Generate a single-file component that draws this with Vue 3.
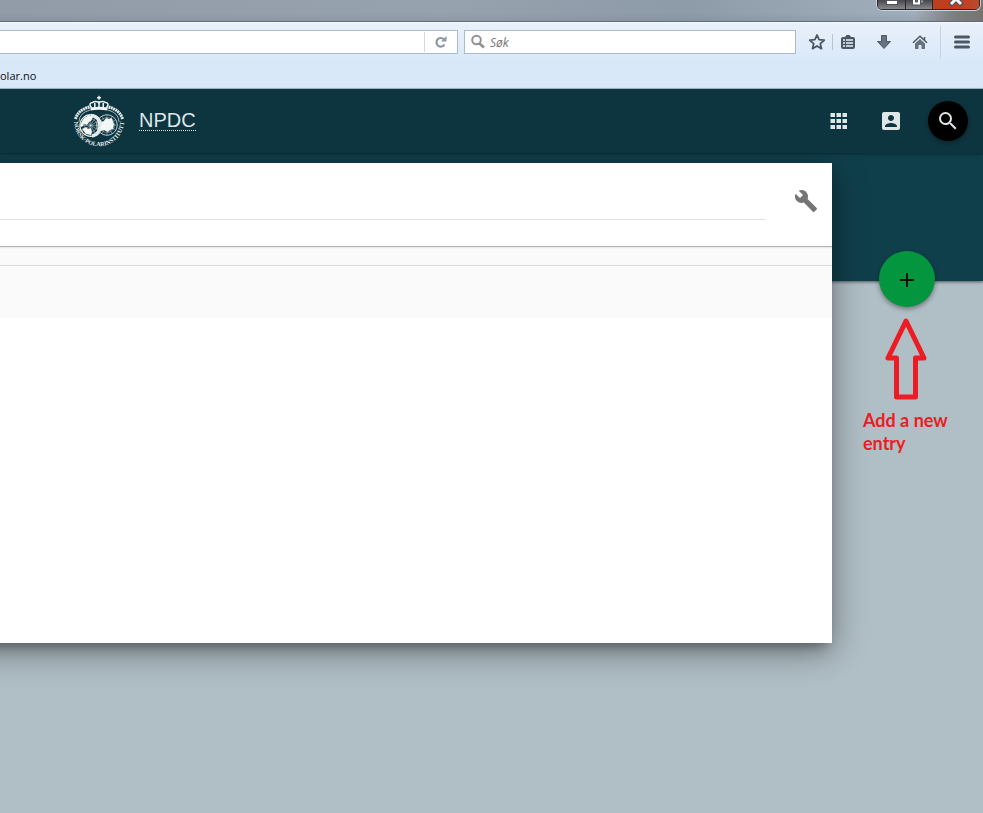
<script setup>
import { ref } from 'vue'

const address = ref('')
const browserQuery = ref('')
const query = ref('')
const gridCells = [4, 10, 16]
const meridians = [0, 30, 60, 90, 120, 150]
</script>

<template>
  <div class="window">
    <div class="titlebar">
      <div class="window-controls">
        <button class="control" aria-label="Minimize">
          <svg width="27" height="10" viewBox="0 0 27 10"><rect x="8.500" y=".5" width="11" height="4" fill="#fff" stroke="#50545e" /></svg>
        </button>
        <button class="control" aria-label="Restore">
          <svg width="26" height="10" viewBox="0 0 26 10">
            <path d="M15 0h2v3h-2z" fill="#dfe2e6" stroke="#50545e" />
            <path d="M6.500-3h8v8h-8z" fill="#fff" stroke="#50545e" />
            <path d="M9.500-1h2v3h-2z" fill="#6a6e74" stroke="#50545e" />
          </svg>
        </button>
        <button class="control close" aria-label="Close">
          <svg width="46" height="10" viewBox="0 0 46 10">
            <path d="M17 5l6-6 6 6" fill="none" stroke="#4b5064" stroke-width="5" />
            <path d="M18 4l5-5 5 5" fill="none" stroke="#f2f4f8" stroke-width="3" />
          </svg>
        </button>
      </div>
    </div>

    <div class="browser">
      <div class="nav">
        <div class="address">
          <input v-model="address" type="text" aria-label="Address" />
          <button class="reload" aria-label="Reload">
            <svg width="14" height="14" viewBox="0 0 14 14">
              <path d="M10.500 9.500A4.300 4.300 0 1 1 9.800 4.200" fill="none" stroke="#8b97a5" stroke-width="2.200" />
              <path d="M12.500 1v5.500H7z" fill="#8b97a5" />
            </svg>
          </button>
        </div>
        <label class="search">
          <svg width="16" height="16" viewBox="0 0 16 16">
            <circle cx="6.500" cy="6" r="4.300" fill="none" stroke="#929292" stroke-width="2" />
            <path d="M9.500 9.500l4.500 4" stroke="#929292" stroke-width="2.800" />
          </svg>
          <input v-model="browserQuery" type="text" placeholder="Søk" aria-label="Søk" />
        </label>
        <div class="tools">
          <button class="tool star" aria-label="Bookmark">
            <svg width="18" height="18" viewBox="0 0 18 18"><path d="M9 2l2.100 4.700 5.100.5-3.900 3.400 1.200 5L9 13l-4.500 2.600 1.200-5-3.900-3.400 5.100-.5z" fill="none" stroke="#4b5764" stroke-width="1.800" stroke-linejoin="round" /></svg>
          </button>
          <button class="tool list" aria-label="Bookmarks">
            <svg width="16" height="16" viewBox="0 0 16 16">
              <path d="M3 3h2l1.500-2h3L11 3h2q2 0 2 2v8q0 2-2 2H3q-2 0-2-2V5q0-2 2-2z" fill="#4b5764" />
              <path d="M3 6h2M6 6h7M3 9h2M6 9h7M3 12h2M6 12h7" stroke="#e8f1fa" stroke-width="1.700" />
            </svg>
          </button>
          <button class="tool" aria-label="Downloads">
            <svg width="16" height="16" viewBox="0 0 16 16"><path d="M5.500 1.500h5v6h4L8 14.500 1.500 7.500h4z" fill="#657280" stroke="#4b5764" /></svg>
          </button>
          <button class="tool" aria-label="Home">
            <svg width="16" height="16" viewBox="0 0 16 16">
              <path d="M3 9.500l5-4.500 5 4.500V15H9.500v-4h-3v4H3z" fill="#657280" />
              <path d="M1 8.800l7-6.500 7 6.500" fill="none" stroke="#4b5764" stroke-width="1.500" />
              <path d="M12.500 3v3" fill="none" stroke="#4b5764" stroke-width="1.500" />
            </svg>
          </button>
          <button class="tool menu" aria-label="Menu">
            <svg width="16" height="14" viewBox="0 0 16 14"><path d="M1.500 2h13M1.500 7h13M1.500 12h13" stroke="#4b5764" stroke-width="3" stroke-linecap="round" /></svg>
          </button>
        </div>
      </div>
      <div class="bookmarks"><a href="#">olar.no</a></div>
    </div>

    <header class="header">
      <svg class="logo" width="54" height="54" viewBox="0 0 54 54" role="img" aria-label="Norsk Polarinstitutt">
        <defs><path id="motto" d="M2.200 24a25 25 0 1 0 49.600 0" /></defs>
        <g fill="none" stroke="#e4eaec">
          <path d="M3.500 25Q6 16 17.500 13M50.500 25Q48 16 36.500 13" stroke-width="3" stroke-dasharray="2 .5" />
          <path d="M7 28Q7 19 18 16M47 28Q47 19 36 16" stroke-width=".7" />
          <circle cx="18.700" cy="31.500" r="10.800" stroke-width="1.200" />
          <circle cx="35" cy="31" r="10.300" stroke-width=".8" />
          <g stroke-width=".4">
            <path v-for="angle in meridians" :key="angle" d="M8 31.500h21.400" :transform="`rotate(${angle} 18.700 31.500)`" />
            <path v-for="angle in meridians" :key="angle + 180" d="M25 31h20" :transform="`rotate(${angle} 35 31)`" />
            <circle cx="18.700" cy="31.500" r="6.500" />
            <circle cx="35" cy="31" r="7.500" />
          </g>
          <path d="M19 21.500q9 1 9 10 0 9-8 10.500" stroke-width="3.500" />
        </g>
        <g fill="#f3f6f7">
          <path d="M9 29l3-5 5-3 4 2-2 4-2 1-2 3-3-1-2 3-2-1zM10 35l4-2 2 2 3-1 1 4-1 3-5-1z" />
          <path d="M29 28l3-1 2-3 3 1 3-1 1 4 1 2-1 5-3 1-2 2-4-2-3 1-1-3 2-3z" />
          <path d="M26.300 1.800h1.400v1.300H29v1.300h-1.300v1.400h-1.400V4.400H25V3.100h1.300z" />
          <path d="M18.500 13.600q8.500-1.500 17 0v2.800q-8.500-1.300-17 0z" />
        </g>
        <g fill="none" stroke="#f3f6f7" stroke-width="1.500">
          <path d="M19.500 14q-3.500-5 1-5.500 4-2 6.500.5 2.500-2.500 6.500-.5 4.500.5 1 5.500" />
          <path d="M22.800 13.500V9M27 13.200V7M31.200 13.500V9" />
        </g>
        <text class="motto"><textPath href="#motto" startOffset="50%" text-anchor="middle">NORSK·POLARINSTITUTT</textPath></text>
      </svg>
      <a class="brand" href="#">NPDC</a>
      <nav class="actions">
        <button class="action" aria-label="Apps">
          <svg width="24" height="24" viewBox="0 0 24 24" fill="#dfe6e8">
            <template v-for="y in gridCells" :key="y">
              <rect v-for="x in gridCells" :key="x" :x="x - .5" :y="y" width="4.500" height="4" />
            </template>
          </svg>
        </button>
        <button class="action" aria-label="Account">
          <svg width="24" height="24" viewBox="0 0 24 24" fill="#dfe6e8"><path d="M3 5v14a2 2 0 0 0 2 2h14c1.100 0 2-.9 2-2V5c0-1.100-.9-2-2-2H5a2 2 0 0 0-2 2zm12 4c0 1.660-1.340 3-3 3s-3-1.340-3-3 1.340-3 3-3 3 1.340 3 3zm-9 8c0-2 4-3.100 6-3.100s6 1.100 6 3.100v1H6v-1z" /></svg>
        </button>
        <button class="action find" aria-label="Search">
          <svg width="24" height="24" viewBox="0 0 24 24" fill="#dfe6e8"><path d="M15.500 14h-.79l-.28-.27A6.470 6.470 0 0 0 16 9.500 6.500 6.500 0 1 0 9.500 16c1.610 0 3.090-.59 4.230-1.570l.27.28v.79l5 4.990L20.490 19l-4.990-5zm-6 0C7.010 14 5 11.990 5 9.500S7.010 5 9.500 5 14 7.010 14 9.500 11.990 14 9.500 14z" /></svg>
        </button>
      </nav>
    </header>

    <main class="page">
      <div class="hero"></div>
      <div class="content">
        <section class="card">
          <div class="filter">
            <input v-model="query" type="text" aria-label="Filter entries" />
            <button class="settings" aria-label="Settings">
              <svg width="24" height="24" viewBox="0 0 24 24" fill="#757575"><path d="M22.700 19l-9.100-9.100c.9-2.300.4-5-1.500-6.900-2-2-5-2.400-7.400-1.300L9 6 6 9 1.600 4.700C.4 7.100.9 10.100 2.900 12.100c1.900 1.900 4.600 2.400 6.900 1.500l9.100 9.100c.4.4 1 .4 1.400 0l2.300-2.300c.5-.4.5-1.100.1-1.400z" /></svg>
            </button>
          </div>
          <div class="strip"></div>
          <div class="summary"></div>
          <div class="results"></div>
        </section>
        <aside class="side">
          <button class="add" aria-label="Add a new entry">
            <svg width="24" height="24" viewBox="0 0 24 24"><path d="M12 6v14M5 13h14" stroke="#07150b" stroke-width="2" /></svg>
          </button>
          <svg class="arrow" width="44" height="84" viewBox="0 0 44 84"><path d="M21 4L3 41h8.500v39h19V41H39z" fill="none" stroke="#ed1c24" stroke-width="5" stroke-linejoin="round" /></svg>
          <p class="hint">Add a new entry</p>
        </aside>
      </div>
    </main>
  </div>
</template>

<style>
body {
  margin: 0;
  background: #b0bec5;
}
</style>

<style scoped>
.window {
  display: flex;
  flex-direction: column;
  min-height: 100vh;
  overflow: hidden;
  font-family: "Liberation Sans", Arial, sans-serif;
}
button {
  display: flex;
  align-items: center;
  justify-content: center;
  margin: 0;
  padding: 0;
  border: 0;
  background: none;
}
svg {
  display: block;
  flex: none;
}
input {
  box-sizing: border-box;
  min-width: 0;
  padding: 0;
  border: 0;
  outline: 0;
  background: none;
}
.titlebar {
  display: flex;
  justify-content: flex-end;
  align-items: flex-start;
  box-sizing: border-box;
  height: 22px;
  padding-right: 2px;
  border-bottom: 1px solid #606c79;
  background:
    linear-gradient(#fff0 60%, #6b778533),
    linear-gradient(90deg, #929ca8 0%, #96a2ae 45%, #8e9ba8 70%, #a1afbd 93%, #7e7f80 97%, #77736f);
}
.window-controls {
  display: flex;
  gap: 1px;
  padding: 0 1px 1px;
  border: 1px solid #ccd3da;
  border-top: 0;
  border-radius: 0 0 6px 6px;
  background: #29282b;
}
.control {
  align-items: flex-start;
  height: 9px;
  overflow: hidden;
  border-radius: 0 0 0 3px;
  background: linear-gradient(#45474b, #85888d);
}
.control + .control {
  border-radius: 0;
}
.control.close {
  border-radius: 0 0 3px 0;
  background: linear-gradient(90deg, #b94020, #c63a18 50%, #b94b31);
}
.browser {
  box-sizing: border-box;
  height: 67px;
  padding-top: 7px;
  border-top: 1px solid #f5f9fd;
  border-bottom: 1px solid #a9bacb;
  background: linear-gradient(#e9f1fb, #d9e8f8 60%);
}
.nav {
  display: flex;
  align-items: center;
  height: 24px;
}
.address,
.search {
  display: flex;
  align-items: center;
  box-sizing: border-box;
  height: 24px;
  border: 1px solid #a9bbce;
  background: #fff;
}
.address {
  flex: 458 1 458px;
  border-left: 0;
}
.address input {
  flex: 1;
}
.reload {
  width: 33px;
  height: 20px;
  border-left: 1px solid #d5d9de;
}
.search {
  flex: 332 1 332px;
  gap: 4px;
  margin-left: 6px;
  padding-left: 5px;
}
.search input {
  flex: 1;
  font: italic 12px "Open Sans", "Noto Sans", sans-serif;
}
.search input::placeholder {
  color: #757575;
  opacity: 1;
}
.tools {
  display: flex;
  align-items: center;
  justify-content: flex-end;
  flex: none;
  width: 187px;
}
.tool {
  width: 36px;
  height: 24px;
}
.tool.star {
  width: 29px;
  height: 16px;
  padding-right: 2px;
  border-right: 1px solid #b7c3cf;
}
.tool.list {
  width: 30px;
  margin-right: 3px;
}
.tool.menu {
  width: 43px;
  height: 32px;
  margin-left: 2px;
  border-left: 1px solid #c5d2df;
}
.bookmarks {
  padding-top: 14px;
}
.bookmarks a {
  display: block;
  color: #111;
  font: 11px/16px "Open Sans", "Noto Sans", sans-serif;
  text-decoration: none;
}
.header {
  display: flex;
  align-items: center;
  box-sizing: border-box;
  height: 64px;
  padding: 0 15px 0 72px;
  position: relative;
  z-index: 1;
  background: #0d3540;
  box-shadow: 0 1px 3px #0006;
}
.motto {
  fill: #e4eaec;
  font: bold 6px "Liberation Serif", serif;
}
.brand {
  margin: 0 0 2px 13px;
  border-bottom: 1px dotted #dfe6e8;
  color: #dfe6e8;
  font-size: 20px;
  line-height: 20px;
  text-decoration: none;
}
.actions {
  display: flex;
  gap: 12px;
  margin-left: auto;
}
.action {
  width: 40px;
  height: 40px;
}
.find {
  margin-left: 5px;
  border-radius: 50%;
  background: #000;
  box-shadow: 0 2px 5px #0005;
}
.page {
  display: grid;
  grid-template-rows: 128px auto;
  flex: 1;
}
.hero {
  grid-area: 1 / 1;
  background: #103f4c;
  box-shadow: 0 1px 3px #0008;
}
.content {
  display: flex;
  align-items: flex-start;
  grid-area: 1 / 1 / 3 / 2;
  z-index: 0;
}
.card {
  flex: 1;
  margin: 10px 0 0 -48px;
  background: #fff;
  box-shadow: 0 9px 12px -6px #0005, 0 8px 32px #0006;
}
.filter {
  display: flex;
  align-items: flex-start;
  box-sizing: border-box;
  gap: 21px;
  height: 84px;
  padding-right: 6px;
  border-bottom: 1px solid #b5b5b5;
}
.filter input {
  flex: 1;
  height: 57px;
  padding-left: 48px;
  border-bottom: 1px solid #e0e0e0;
  font-size: 16px;
}
.settings {
  width: 40px;
  height: 40px;
  margin-top: 18px;
}
.strip {
  height: 18px;
  border-bottom: 1px solid #dadada;
  background: linear-gradient(#e4e4e4, #fafafa 2px);
}
.summary {
  height: 52px;
  background: #fafafa;
}
.results {
  height: 325px;
}
.side {
  display: flex;
  flex-direction: column;
  align-items: center;
  box-sizing: border-box;
  width: 151px;
  padding: 98px 1px 0 0;
}
.add {
  width: 56px;
  height: 56px;
  border-radius: 50%;
  background: #03963e;
  box-shadow: 0 2px 5px #0006;
}
.arrow {
  margin-top: 10px;
}
.hint {
  width: 88px;
  margin: 8px 0 0;
  color: #ed1c24;
  font: bold 18px/23px Lato, sans-serif;
}
</style>
